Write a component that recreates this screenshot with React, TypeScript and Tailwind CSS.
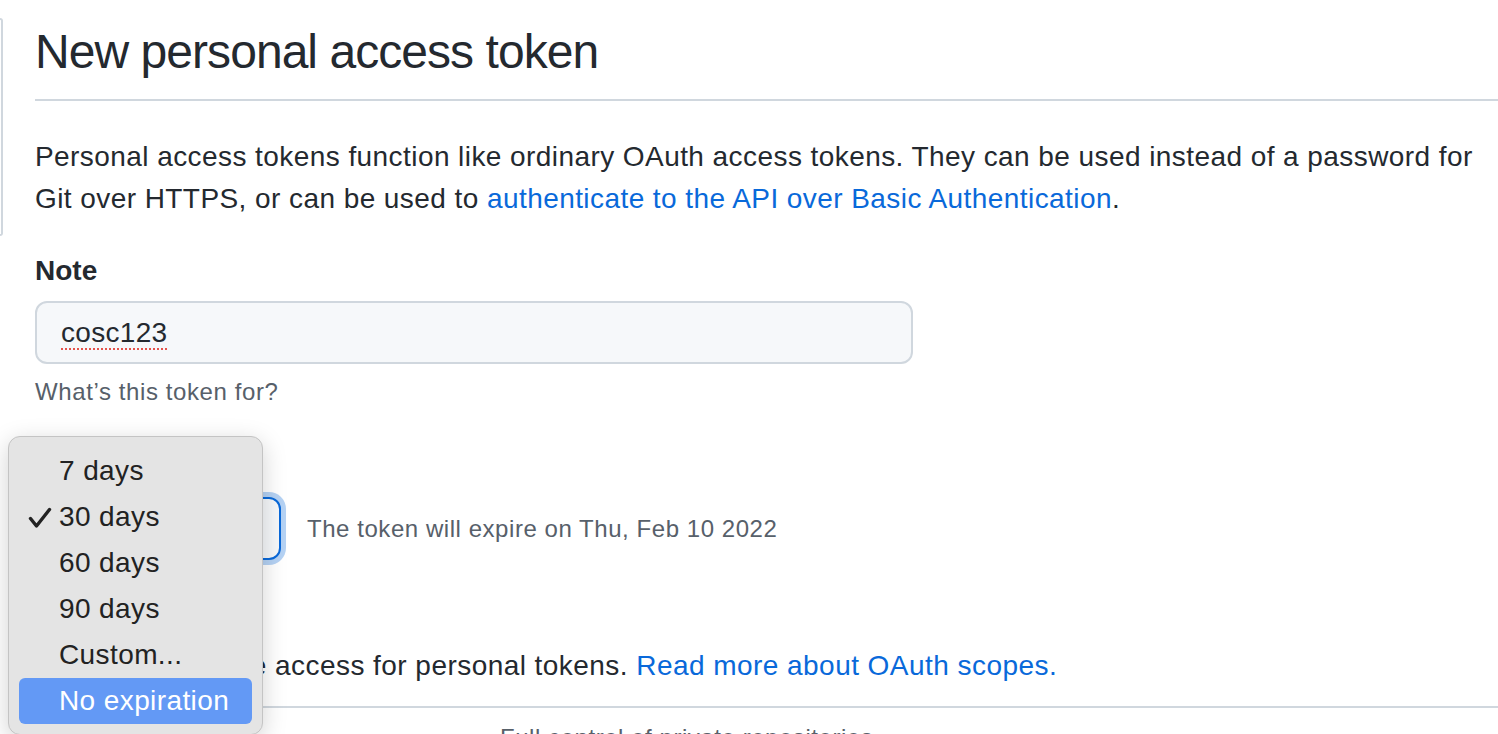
const options = ['7 days', '30 days', '60 days', '90 days', 'Custom...', 'No expiration']

function ExpirationMenu() {
  return (
    <div className="absolute left-[8px] top-[436px] w-[255px] rounded-[12px] border border-[#c4c4c4] bg-[#e4e4e4] pt-[11px] pb-[10px] shadow-[0_6px_24px_rgba(0,0,0,0.18)]">
      {options.map((o) => {
        const active = o === 'No expiration'
        return (
          <div key={o} className="px-[10px]">
            <div
              className={
                active
                  ? 'relative flex h-[46px] items-center rounded-[6px] bg-[#6399f5] pl-[40px] text-white'
                  : 'relative flex h-[46px] items-center pl-[40px] text-[#222222]'
              }
            >
              {o === '30 days' && (
                <svg className="absolute left-[9px] top-[13px]" width="24" height="22" viewBox="0 0 24 22" fill="none">
                  <path d="M2.5 11.5 8.5 19 21.5 2.5" stroke="#222222" strokeWidth="3.4" strokeLinecap="round" strokeLinejoin="round" />
                </svg>
              )}
              <span className="text-[28px] leading-none tracking-[0.4px]">{o}</span>
            </div>
          </div>
        )
      })}
    </div>
  )
}

export default function App() {
  return (
    <div className="relative flex h-[734px] w-[1498px] overflow-hidden bg-white font-['Liberation_Sans',Arial,sans-serif] text-[#24292f]">
      {/* edge of the settings sidebar */}
      <div className="w-[3px] shrink-0 pt-[18px]">
        <div className="h-[218px] rounded-r-[12px] border-2 border-l-0 border-[#d0d7de]" />
      </div>

      <div className="flex-1 pl-[32px]">
        <div className="border-b-2 border-[#d0d7de] pt-[22px] pb-[17px]">
          <h2 className="text-[48px] leading-[60px] font-normal tracking-[-0.95px]">New personal access token</h2>
        </div>

        <p className="mt-[35px] text-[28px] leading-[42px] tracking-[0.43px]">
          Personal access tokens function like ordinary OAuth access tokens. They can be used instead of a password for
          Git over HTTPS, or can be used to{' '}
          <a className="text-[#0969da]">authenticate to the API over Basic Authentication</a>.
        </p>

        <div className="mt-[30px] text-[28px] leading-[42px] font-bold">Note</div>
        <div className="mt-[9px] flex h-[63px] w-[878px] items-center rounded-[12px] border-2 border-[#d0d7de] bg-[#f6f8fa] px-[24px]">
          <span className="text-[28px] leading-none tracking-[0.3px] underline decoration-dotted decoration-[#e5534b] decoration-2 underline-offset-[7px]">
            cosc123
          </span>
        </div>
        <div className="mt-[10px] text-[24px] leading-[36px] tracking-[0.6px] text-[#57606a]">What’s this token for?</div>

        <div className="mt-[35px] text-[28px] leading-[42px] font-bold">
          Expiration <span className="text-[#cf222e]">*</span>
        </div>
        <div className="mt-[10px] flex items-center gap-[26px]">
          <div className="flex h-[63px] w-[246px] items-center justify-between rounded-[12px] border-2 border-[#0969da] bg-[#f6f8fa] pl-[24px] pr-[14px] shadow-[0_0_0_5px_rgba(9,105,218,0.3)]">
            <span className="text-[28px]">30 days</span>
            <svg width="16" height="16" viewBox="0 0 16 16" fill="#57606a">
              <path d="M4.4 6.2 8 9.8l3.6-3.6.8.8L8 11.4 3.6 7z" />
            </svg>
          </div>
          <span className="text-[24px] tracking-[0.55px] text-[#57606a]">The token will expire on Thu, Feb 10 2022</span>
        </div>

        <div className="mt-[26px] text-[28px] leading-[42px] font-bold">Select scopes</div>
        <p className="mt-[17px] text-[28px] leading-[42px] tracking-[0.45px]">
          Scopes define the access for personal tokens.{' '}
          <a className="text-[#0969da]">Read more about OAuth scopes.</a>
        </p>

        <div className="-mr-[24px] mt-[19px] rounded-t-[12px] border-2 border-b-0 border-[#d0d7de]">
          <div className="flex items-start pt-[12px]">
            <div className="flex w-[463px] items-center gap-[12px] pl-[6px]">
              <div className="h-[26px] w-[26px] rounded-[6px] border-2 border-[#6e7781] bg-white" />
              <span className="text-[28px] font-bold">repo</span>
            </div>
            <span className="text-[24px] tracking-[0.55px] text-[#57606a]">Full control of private repositories</span>
          </div>
        </div>
      </div>

      <ExpirationMenu />
    </div>
  )
}
